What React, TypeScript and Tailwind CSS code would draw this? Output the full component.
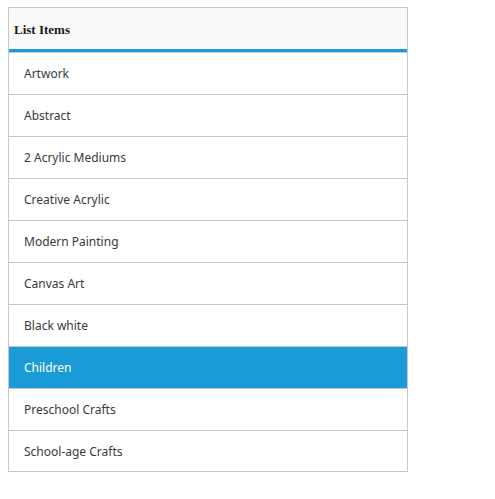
const items = [
  "Artwork",
  "Abstract",
  "2 Acrylic Mediums",
  "Creative Acrylic",
  "Modern Painting",
  "Canvas Art",
  "Black white",
  "Children",
  "Preschool Crafts",
  "School-age Crafts",
];

export default function App() {
  const selected = "Children";

  return (
    <div className="min-h-screen bg-white pt-[7px] pl-2">
      <div className="w-[400px] border border-[#c8c8c8]">
        <div className="flex h-[44px] items-center border-b-[3px] border-[#1a9bd7] bg-[#fafafa] pl-[5px] pt-[3px]">
          <span
            className="text-[13px] font-bold text-[#1a1a1a]"
            style={{ fontFamily: '"Liberation Serif", "Times New Roman", serif' }}
          >
            List Items
          </span>
        </div>
        <ul style={{ fontFamily: '"Noto Sans", "Open Sans", sans-serif' }}>
          {items.map((item) => (
            <li
              key={item}
              className={
                item === selected
                  ? "flex h-[42px] items-center border-t border-[#c8c8c8] bg-[#1a9bd7] pl-[15px] text-[12px] text-white"
                  : "flex h-[42px] items-center border-t border-[#c8c8c8] pl-[15px] text-[12px] text-[#3a3a3a] last:h-[41px] last:pt-[1px]"
              }
            >
              {item}
            </li>
          ))}
        </ul>
      </div>
    </div>
  );
}
